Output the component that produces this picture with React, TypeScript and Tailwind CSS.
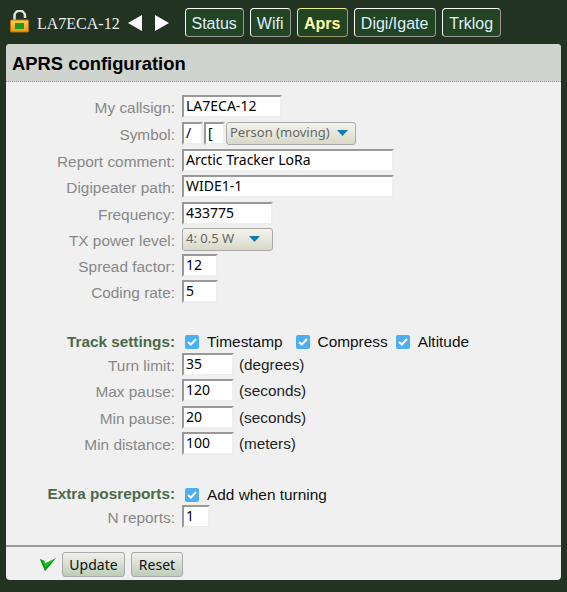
const inputCls =
  "block h-full bg-white border-2 border-t-[#999] border-l-[#999] border-r-[#eee] border-b-[#eee] pl-[2px] pr-0 pb-[2px] text-[14px] text-black outline-none [font-family:'Noto_Sans',sans-serif]";

const tabs = [
  { label: "Status", width: "w-[59px]" },
  { label: "Wifi", width: "w-[41px]" },
  { label: "Aprs", width: "w-[51px]", active: true },
  { label: "Digi/Igate", width: "w-[82px]" },
  { label: "Trklog", width: "w-[59px]" },
];

function Row({
  label,
  children,
  className = "mb-[3px]",
}: {
  label: string;
  children: React.ReactNode;
  className?: string;
}) {
  return (
    <div className={`flex h-[23px] items-center ${className}`}>
      <label className="w-[169px] shrink-0 pt-[3px] text-right text-[15.4px] text-[#888]">{label}</label>
      <div className="ml-[7px] flex h-full items-center">{children}</div>
    </div>
  );
}

function Field({ value, width }: { value: string; width: string }) {
  return <input readOnly value={value} className={`${inputCls} ${width}`} />;
}

function Dropdown({ value, width, arrow }: { value: string; width: string; arrow: string }) {
  return (
    <button className={`flex h-[23px] items-center rounded-[3px] border border-[#aaa] bg-gradient-to-b from-[#f4f4ee] to-[#d8d8c8] pb-[1px] pl-[3px] text-[13px] text-[#666] [font-family:'Noto_Sans',sans-serif] ${width}`}>
      <span>{value}</span>
      <svg className={arrow} width="11" height="6" viewBox="0 0 11 6">
        <path d="M0 0h11L5.5 6z" fill="#0a7fb5" />
      </svg>
    </button>
  );
}

function Check({ label, className = "" }: { label: string; className?: string }) {
  return (
    <label className={`flex items-center text-[15.4px] text-[#111] ${className}`}>
      <span className="flex h-[14px] w-[14px] items-center justify-center rounded-[2px] bg-[#4cb0f0]">
        <svg width="10" height="8" viewBox="0 0 10 8">
          <path d="M1 4l2.8 2.6L9 1" fill="none" stroke="#fff" strokeWidth="2" />
        </svg>
      </span>
      <span className="ml-[8px] pt-[1px]">{label}</span>
    </label>
  );
}

function Lock() {
  return (
    <svg width="20" height="23" viewBox="0 0 20 23">
      <path d="M4.5 10V6a5 5 0 0 1 10.5 0v2" fill="none" stroke="#e4e4dc" strokeWidth="2.5" />
      <defs>
        <linearGradient id="lockBody" x1="0" y1="0" x2="0" y2="1">
          <stop offset="0" stopColor="#fbd050" />
          <stop offset="1" stopColor="#e89a10" />
        </linearGradient>
      </defs>
      <rect x="0.5" y="10" width="18" height="12" rx="1" fill="url(#lockBody)" stroke="#b86c10" />
      <rect x="5" y="13" width="9" height="6" fill="#1f9a1f" />
    </svg>
  );
}

export default function App() {
  return (
    <div className="h-screen overflow-hidden bg-[#223322] [font-family:'Liberation_Sans',sans-serif]">
      <header className="flex h-[44px] items-start pt-[8px]">
        <div className="ml-[10px] mt-[2px]">
          <Lock />
        </div>
        <span className="ml-[7px] mt-[6px] text-[16px] leading-[20px] text-[#eee] [font-family:'Liberation_Serif',serif]">
          LA7ECA-12
        </span>
        <svg className="ml-[8px] mt-[7px]" width="14" height="16" viewBox="0 0 14 16">
          <path d="M14 0v16L0 8z" fill="#fff" />
        </svg>
        <svg className="ml-[13px] mt-[7px]" width="14" height="16" viewBox="0 0 14 16">
          <path d="M0 0v16l14-8z" fill="#fff" />
        </svg>
        <nav className="ml-[16px] flex gap-[6px]">
          {tabs.map((t) => (
            <button
              key={t.label}
              className={`flex h-[29px] items-center justify-center rounded-[4px] border bg-[#224422] pt-[2px] text-[16px] ${t.width} ${
                t.active
                  ? "border-t-[#eeee99] border-l-[#eeee99] border-r-[#999966] border-b-[#999966] font-bold text-[#ffffaa]"
                  : "border-t-[#fff] border-l-[#fff] border-r-[#999] border-b-[#999] text-[#ddeeff]"
              }`}
            >
              {t.label}
            </button>
          ))}
        </nav>
      </header>

      <main className="mx-[6px] flex h-[536px] flex-col overflow-hidden rounded-[4px] bg-[#f0f0f0]">
        <div className="h-[38px] border-b border-dotted border-[#999] bg-[#d0d4ce] pl-[6px] pt-[9px] text-[18.4px] font-bold leading-[21px] text-black">
          APRS configuration
        </div>

        <div className="flex-1 pt-[13px]">
          <Row label="My callsign:" className="mb-[4px]">
            <Field value="LA7ECA-12" width="w-[100px]" />
          </Row>
          <Row label="Symbol:" className="mb-[4px]">
            <Field value="/" width="w-[21px]" />
            <Field value="[" width="ml-[1px] w-[21px]" />
            <div className="ml-[1px]">
              <Dropdown value="Person (moving)" width="w-[130px]" arrow="ml-[7px]" />
            </div>
          </Row>
          <Row label="Report comment:">
            <Field value="Arctic Tracker LoRa" width="w-[212px]" />
          </Row>
          <Row label="Digipeater path:" className="mb-[4px]">
            <Field value="WIDE1-1" width="w-[212px]" />
          </Row>
          <Row label="Frequency:">
            <Field value="433775" width="w-[91px]" />
          </Row>
          <Row label="TX power level:">
            <Dropdown value="4: 0.5 W" width="w-[91px]" arrow="ml-[15px]" />
          </Row>
          <Row label="Spread factor:">
            <Field value="12" width="w-[36px]" />
          </Row>
          <Row label="Coding rate:" className="mb-[27px]">
            <Field value="5" width="w-[36px]" />
          </Row>

          <div className="flex h-[23px] items-center">
            <label className="w-[169px] shrink-0 pt-[1px] text-right text-[15.3px] font-bold text-[#4a6a4a]">Track settings:</label>
            <Check label="Timestamp" className="ml-[10px]" />
            <Check label="Compress" className="ml-[13px]" />
            <Check label="Altitude" className="ml-[8px]" />
          </div>
          {[
            ["Turn limit:", "35", "(degrees)", "mb-[3px]"],
            ["Max pause:", "120", "(seconds)", "mb-[4px]"],
            ["Min pause:", "20", "(seconds)", "mb-[3px]"],
            ["Min distance:", "100", "(meters)", "mb-[28px]"],
          ].map(([label, value, unit, mb]) => (
            <Row key={label} label={label} className={mb}>
              <Field value={value} width="w-[52px]" />
              <span className="ml-[5px] pt-[1px] text-[15.3px] text-[#222]">{unit}</span>
            </Row>
          ))}

          <div className="mb-[-1px] flex h-[23px] items-center">
            <label className="w-[169px] shrink-0 text-right text-[15.3px] font-bold text-[#4a6a4a]">Extra posreports:</label>
            <Check label="Add when turning" className="ml-[10px]" />
          </div>
          <Row label="N reports:" className="">
            <Field value="1" width="w-[28px]" />
          </Row>
        </div>

        <div className="flex h-[35px] items-start border-t-2 border-[#999] pl-[34px] pt-[5px]">
          <svg className="mt-[6px]" width="16" height="14" viewBox="0 0 16 14">
            <path d="M0 1l4 1.5L5.5 5 16 0 5 13z" fill="#1cc41c" />
            <path d="M0 1l3 2 2 6.5L16 0 5 13z" fill="#12901c" />
          </svg>
          <button className="ml-[6px] h-[25px] w-[63px] rounded-[3px] border border-[#aaa] bg-gradient-to-b from-[#f0f0ec] to-[#bccdb8] text-[14px] text-[#111] [font-family:'Noto_Sans',sans-serif]">
            Update
          </button>
          <button className="ml-[6px] h-[25px] w-[52px] rounded-[3px] border border-[#aaa] bg-gradient-to-b from-[#f0f0ec] to-[#bccdb8] text-[14px] text-[#111] [font-family:'Noto_Sans',sans-serif]">
            Reset
          </button>
        </div>
      </main>
    </div>
  );
}
